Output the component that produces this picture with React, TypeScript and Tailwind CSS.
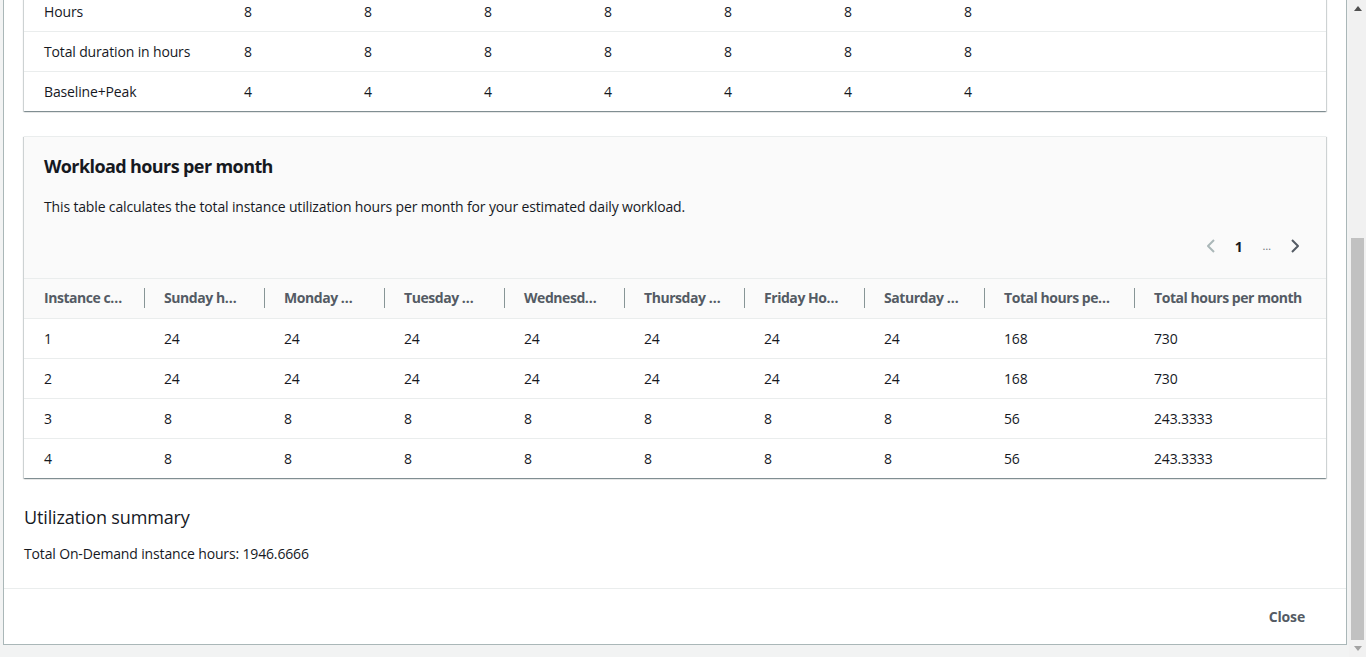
import { ReactNode } from "react";

const DAILY = [
  { label: "Hours", values: [8, 8, 8, 8, 8, 8, 8] },
  { label: "Total duration in hours", values: [8, 8, 8, 8, 8, 8, 8] },
  { label: "Baseline+Peak", values: [4, 4, 4, 4, 4, 4, 4] },
];

const MONTH_HEADERS = [
  "Instance c…",
  "Sunday h…",
  "Monday …",
  "Tuesday …",
  "Wednesd…",
  "Thursday …",
  "Friday Ho…",
  "Saturday …",
  "Total hours pe…",
  "Total hours per month",
];

const MONTH_ROWS: (string | number)[][] = [
  [1, 24, 24, 24, 24, 24, 24, 24, 168, 730],
  [2, 24, 24, 24, 24, 24, 24, 24, 168, 730],
  [3, 8, 8, 8, 8, 8, 8, 8, 56, "243.3333"],
  [4, 8, 8, 8, 8, 8, 8, 8, 56, "243.3333"],
];

const CARD =
  "bg-white border-t border-[#eaeded] shadow-[0_1px_1px_0_rgba(0,28,36,0.3),1px_1px_1px_0_rgba(0,28,36,0.15),-1px_1px_1px_0_rgba(0,28,36,0.15)]";

function Chevron({ dir, color }: { dir: "left" | "right"; color: string }) {
  return (
    <svg width="16" height="16" viewBox="0 0 16 16" fill="none">
      <path
        d={dir === "left" ? "M11 2 5 8l6 6" : "M5 2l6 6-6 6"}
        stroke={color}
        strokeWidth="2"
        strokeLinejoin="round"
      />
    </svg>
  );
}

function Cell({ children }: { children: ReactNode }) {
  return <div className="pl-5 flex items-center whitespace-nowrap">{children}</div>;
}

function Scrollbar() {
  return (
    <div className="w-[17px] bg-[#f1f1f1] flex flex-col shrink-0">
      <div className="h-[17px] flex items-center justify-center">
        <svg width="8" height="5" viewBox="0 0 8 5">
          <path d="M0 5 4 0l4 5z" fill="#505050" />
        </svg>
      </div>
      <div className="flex-1 flex flex-col px-[2px] pt-[221px]">
        <div className="flex-1 bg-[#c1c1c1]" />
      </div>
      <div className="h-[17px] flex items-center justify-center">
        <svg width="8" height="5" viewBox="0 0 8 5">
          <path d="M0 0h8L4 5z" fill="#a3a3a3" />
        </svg>
      </div>
    </div>
  );
}

export default function App() {
  return (
    <div className="flex w-[1366px] h-[657px] overflow-hidden bg-[#f2f3f3] text-[14px] text-[#16191f] font-['Open_Sans',sans-serif] tracking-[-0.15px]">
      <div className="flex-1 flex flex-col pl-[3px] pr-[2px] pb-[12px]">
        <div className="flex-1 flex flex-col bg-white border-x border-b border-[#aab7b8] overflow-hidden">
          <div className="flex-1 px-5 overflow-hidden">
            {/* daily workload table, scrolled partly out of view */}
            <div className={`${CARD} -mt-[10px]`}>
              {DAILY.map((row, i) => (
                <div
                  key={row.label}
                  className={`grid grid-cols-[200px_repeat(7,120px)_1fr] h-10 ${i > 0 ? "border-t border-[#eaeded]" : ""}`}
                >
                  <Cell>{row.label}</Cell>
                  {row.values.map((v, j) => (
                    <Cell key={j}>{v}</Cell>
                  ))}
                  <div />
                </div>
              ))}
            </div>

            <div className={`${CARD} mt-[25px]`}>
              <div className="bg-[#fafafa] px-5 pt-[18px] pb-5 border-b border-[#eaeded]">
                <h2 className="text-[18px] leading-[22px] font-bold tracking-[-0.6px]">Workload hours per month</h2>
                <p className="mt-5 leading-5">
                  This table calculates the total instance utilization hours per month for your estimated daily workload.
                </p>
                <div className="mt-[17px] h-6 flex items-center justify-end gap-3 pr-[3px]">
                  <Chevron dir="left" color="#aab7b8" />
                  <span className="font-bold px-1">1</span>
                  <span className="text-[11px] text-[#687078] px-1">…</span>
                  <Chevron dir="right" color="#545b64" />
                </div>
              </div>

              <div className="grid grid-cols-[repeat(8,120px)_150px_1fr] h-10 pb-[2px] bg-[#fafafa] border-b border-[#eaeded] text-[#545b64] font-bold tracking-[-0.45px]">
                {MONTH_HEADERS.map((h, i) => (
                  <div key={h} className="flex items-center whitespace-nowrap">
                    {i > 0 && <div className="w-px h-5 bg-[#879596]" />}
                    <span className={i > 0 ? "pl-[19px]" : "pl-5"}>{h}</span>
                  </div>
                ))}
              </div>
              {MONTH_ROWS.map((row, i) => (
                <div
                  key={i}
                  className={`grid grid-cols-[repeat(8,120px)_150px_1fr] ${
                    i < MONTH_ROWS.length - 1 ? "h-10 border-b border-[#eaeded]" : "h-[39px]"
                  }`}
                >
                  {row.map((v, j) => (
                    <Cell key={j}>{v}</Cell>
                  ))}
                </div>
              ))}
            </div>

            <h3 className="mt-[28px] text-[18px] leading-[22px]">Utilization summary</h3>
            <p className="mt-4 leading-5">Total On-Demand instance hours: 1946.6666</p>
          </div>

          <div className="h-[56px] border-t border-[#eaeded] flex items-center justify-end pr-[41px]">
            <button className="font-bold text-[#545b64]">Close</button>
          </div>
        </div>
      </div>
      <Scrollbar />
    </div>
  );
}
